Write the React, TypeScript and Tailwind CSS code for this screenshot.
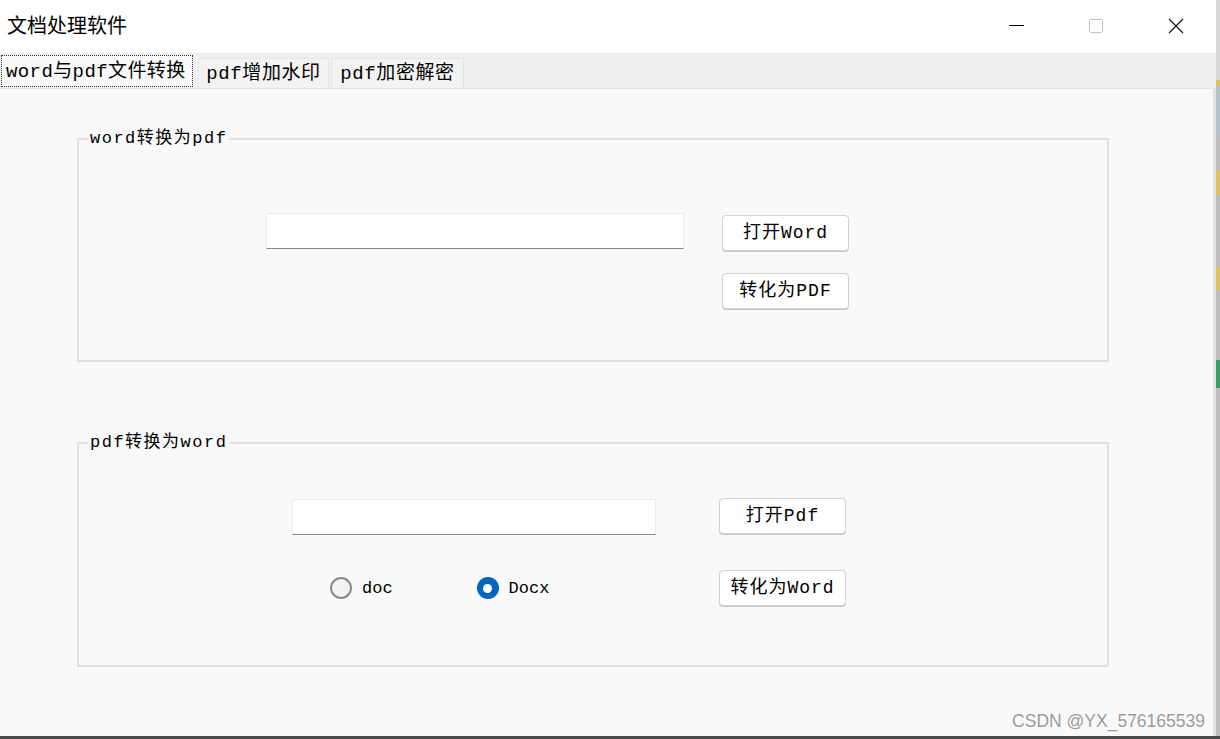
import React from "react";

const mono = "font-['Liberation_Mono','Noto_Sans_CJK_SC',monospace]";

function WinButton({ children }: { children: React.ReactNode }) {
  return <div className="flex h-full w-[80px] items-center justify-center">{children}</div>;
}

function Tab({ label, active, width }: { label: string; active?: boolean; width?: string }) {
  if (active) {
    return (
      <div className="flex h-[35px] items-center pl-[1px]">
        <div
          className={`flex h-[32px] w-[192px] items-center border border-dotted border-[#333] bg-[#f9f9f9] pl-[4px] pt-[3px] text-[19px] leading-none tracking-[0.4px] text-black ${mono}`}
        >
          {label}
        </div>
      </div>
    );
  }
  return (
    <div
      className={`flex h-[30px] ${width} items-center justify-center border border-b-0 border-[#e6e6e6] bg-[#f3f3f3] pt-[2px] text-[19px] leading-none tracking-[0.6px] text-black ${mono}`}
    >
      {label}
    </div>
  );
}

function Btn({ label }: { label: string }) {
  return (
    <button
      className={`flex h-[36px] w-[127px] items-center justify-center rounded-[4px] border border-[#d2d2d2] bg-white text-[18px] leading-none tracking-[1px] text-black shadow-[0_1px_0_#c8c8c8] ${mono}`}
    >
      {label}
    </button>
  );
}

function TextBox({ width }: { width: string }) {
  return <div className={`${width} h-[36px] border border-[#ececec] border-b-[#8a8a8a] bg-white`} />;
}

function Radio({ label, checked }: { label: string; checked?: boolean }) {
  return (
    <div className="flex items-center gap-[10px]">
      {checked ? (
        <div className="flex h-[22px] w-[22px] items-center justify-center rounded-full bg-[#0067c0]">
          <div className="h-[9px] w-[9px] rounded-full bg-white" />
        </div>
      ) : (
        <div className="h-[22px] w-[22px] rounded-full border-2 border-[#8a8a8a] bg-[#f2f2f2]" />
      )}
      <span className={`text-[17px] leading-none text-black ${mono}`}>{label}</span>
    </div>
  );
}

function Group({
  title,
  className,
  children,
}: {
  title: string;
  className: string;
  children: React.ReactNode;
}) {
  return (
    <fieldset className={`ml-[77px] w-[1032px] border-2 border-[#e0e0e0] ${className}`}>
      <legend className={`ml-[9px] px-[2px] text-[17px] leading-[20px] tracking-[1.5px] text-black ${mono}`}>
        {title}
      </legend>
      {children}
    </fieldset>
  );
}

export default function App() {
  return (
    <div className="flex h-[739px] w-[1220px] flex-col overflow-hidden bg-[#4a4a4a]">
      <div className="flex h-[736px]">
        <div className="flex w-[1216px] flex-col bg-white">
          {/* title bar */}
          <div className="flex h-[53px] items-center">
            <span className="mb-[3px] pl-[7px] font-['Noto_Sans_CJK_SC',sans-serif] text-[20px] leading-none text-black">
              文档处理软件
            </span>
            <div className="ml-auto flex h-full">
              <WinButton>
                <div className="mb-[2px] h-[1px] w-[15px] bg-black" />
              </WinButton>
              <WinButton>
                <div className="mb-[2px] h-[14px] w-[14px] rounded-[2px] border border-[#c4c4c4]" />
              </WinButton>
              <WinButton>
                <svg width="16" height="16" viewBox="0 0 16 16" className="mb-[2px]">
                  <path d="M1 1L15 15M15 1L1 15" stroke="#111" strokeWidth="1.2" fill="none" />
                </svg>
              </WinButton>
            </div>
          </div>

          {/* tab strip */}
          <div className="flex h-[35px] items-end gap-[5px] bg-[#efefef]">
            <Tab label="word与pdf文件转换" active />
            <div className="flex gap-[2px]">
              <Tab label="pdf增加水印" width="w-[131px]" />
              <Tab label="pdf加密解密" width="w-[133px]" />
            </div>
          </div>

          {/* tab page */}
          <div className="relative flex-1 border-r-[3px] border-t border-[#e4e4e4] bg-[#f9f9f9]">
            <Group title="word转换为pdf" className="mt-[40px] h-[233px]">
              <div className="flex items-start pl-[187px] pt-[64px]">
                <TextBox width="w-[418px]" />
                <div className="ml-[38px] mt-[2px] flex flex-col gap-[22px]">
                  <Btn label="打开Word" />
                  <Btn label="转化为PDF" />
                </div>
              </div>
            </Group>

            <Group title="pdf转换为word" className="mt-[71px] h-[234px]">
              <div className="flex items-start pl-[213px] pt-[46px]">
                <div className="flex flex-col">
                  <TextBox width="w-[364px]" />
                  <div className="ml-[38px] mt-[42px] flex items-center gap-[84px]">
                    <Radio label="doc" />
                    <Radio label="Docx" checked />
                  </div>
                </div>
                <div className="ml-[63px] mt-[-1px] flex flex-col gap-[36px]">
                  <Btn label="打开Pdf" />
                  <Btn label="转化为Word" />
                </div>
              </div>
            </Group>

            <div className="absolute bottom-[6px] right-[8px] font-['Liberation_Sans',sans-serif] text-[17.5px] leading-none text-[#9c9c9c]">
              CSDN @YX_576165539
            </div>
          </div>
        </div>

        {/* desktop edge */}
        <div className="flex w-[4px] flex-col bg-[#bdbdbd]">
          <div className="h-[80px] bg-[#d8d8d8]" />
          <div className="h-[6px] bg-[#d9c46a]" />
          <div className="h-[49px] bg-[#b7c3cc]" />
          <div className="h-[35px]" />
          <div className="h-[25px] bg-[#d9c46a]" />
          <div className="h-[72px]" />
          <div className="h-[23px] bg-[#d9c46a]" />
          <div className="h-[70px]" />
          <div className="h-[28px] bg-[#3f9a6a]" />
        </div>
      </div>
      <div className="h-[3px] bg-[#4a4a4a]" />
    </div>
  );
}
